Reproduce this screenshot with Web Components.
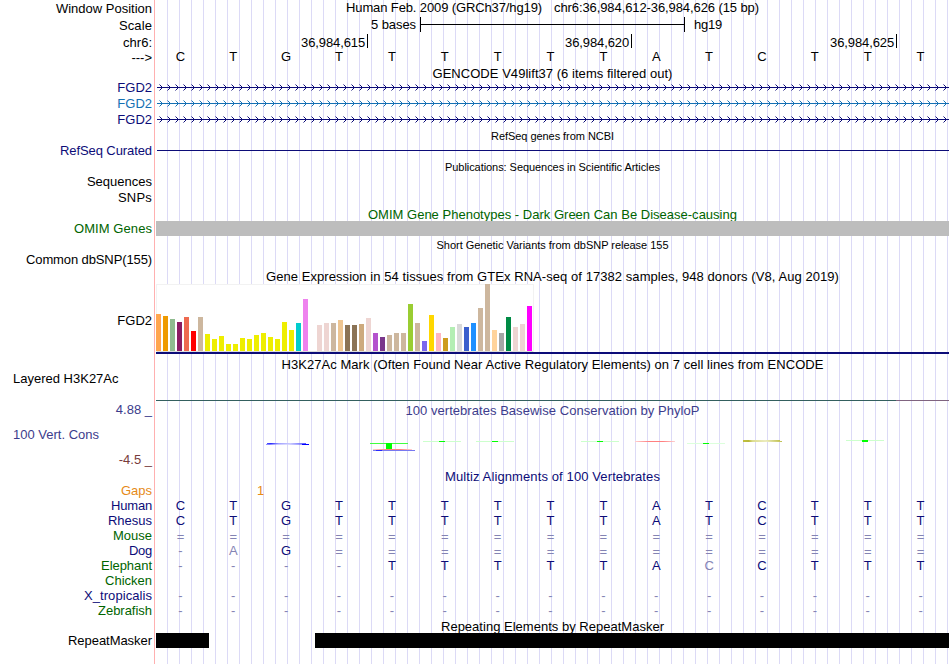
<!DOCTYPE html>
<html lang="en">
<head>
<meta charset="utf-8">
<title>chr6:36,984,612-36,984,626</title>
<style>
    body {
        margin: 0;
        background: #fff;
        color: #000;
        font: 13px/15px "Liberation Sans", Arial, sans-serif;
        overflow: hidden;
    }
</style>
</head>
<body>
<genome-browser></genome-browser>

<script>
const NAVY = '#0c0c78';
const GREEN = '#006400';

// Text stretched or tightened with letter-spacing to a given width
class FitText extends HTMLElement {
    constructor() {
        super();
        this.attachShadow({ mode: 'open' });
        this.shadowRoot.innerHTML = `
            <style>
                :host { display: inline-block; white-space: nowrap; }
            </style>
            <span><slot></slot></span>
        `;
    }

    connectedCallback() {
        const width = parseFloat(this.getAttribute('w'));
        if (!width) return;
        const span = this.shadowRoot.querySelector('span');
        const spacing = (width - span.getBoundingClientRect().width) / this.textContent.length;
        this.style.letterSpacing = spacing.toFixed(3) + 'px';
    }
}

// One horizontal strip: a right aligned label and the drawing area
class TrackRow extends HTMLElement {
    constructor() {
        super();
        this.attachShadow({ mode: 'open' });
        this.shadowRoot.innerHTML = `
            <style>
                :host {
                    display: grid;
                    grid-template-columns: 152px 793px;
                    column-gap: 4px;
                    height: var(--h, 15px);
                    box-sizing: border-box;
                }
                .label {
                    padding-top: var(--label-top, 0px);
                    text-align: right;
                    color: var(--label-color, #000);
                    white-space: nowrap;
                }
                .data { min-width: 0; }
            </style>
            <div class="label"><slot name="label"></slot></div>
            <div class="data"><slot></slot></div>
        `;
    }
}

class TrackTitle extends HTMLElement {
    constructor() {
        super();
        this.attachShadow({ mode: 'open' });
        this.shadowRoot.innerHTML = `
            <style>
                :host { display: flex; justify-content: center; white-space: nowrap; }
                :host([small]) { font-size: 11px; line-height: 12px; padding-top: 2px; }
            </style>
            <slot></slot>
        `;
    }
}

class ScaleBar extends HTMLElement {
    constructor() {
        super();
        this.attachShadow({ mode: 'open' });
        this.shadowRoot.innerHTML = `
            <style>
                :host { display: flex; padding-left: 215px; }
                .bar {
                    width: 263px;
                    height: 15px;
                    margin: 0 9px 0 4px;
                    border: solid #000;
                    border-width: 0 1px;
                    background: linear-gradient(#000, #000) 0 7px / 100% 1px no-repeat;
                }
            </style>
            <fit-text w="45">5 bases</fit-text>
            <div class="bar"></div>
            <fit-text w="28">hg19</fit-text>
        `;
    }
}

class PositionRuler extends HTMLElement {
    constructor() {
        super();
        this.attachShadow({ mode: 'open' });
        this.shadowRoot.innerHTML = `
            <style>
                :host { display: grid; grid-template-columns: 212px 264px 265px; }
                div {
                    display: flex;
                    justify-self: end;
                    height: 13px;
                    padding: 1px 2px 0 0;
                    border-right: 1px solid #000;
                }
            </style>
            <div><fit-text w="64">36,984,615</fit-text></div>
            <div><fit-text w="64">36,984,620</fit-text></div>
            <div><fit-text w="64">36,984,625</fit-text></div>
        `;
    }
}

// Fifteen bases, one per column; lower case letters are mismatches
class BaseRow extends HTMLElement {
    constructor() {
        super();
        this.attachShadow({ mode: 'open' });
    }

    connectedCallback() {
        const cells = this.getAttribute('seq').split('').map(base => {
            if (base === '=') return '<span class="dim low">=</span>';
            const dim = /[a-z-]/.test(base) ? ' class="dim"' : '';
            return `<span${dim}>${base.toUpperCase()}</span>`;
        });
        this.shadowRoot.innerHTML = `
            <style>
                :host {
                    display: grid;
                    grid-template-columns: repeat(15, 1fr);
                    width: 793px;
                    height: 15px;
                    margin-left: -2px;
                    text-align: center;
                }
                .dim { color: #8484b4; }
                .low { padding-top: 1px; }
            </style>
            ${cells.join('')}
        `;
    }
}

class GeneLine extends HTMLElement {
    constructor() {
        super();
        this.attachShadow({ mode: 'open' });
        let arrows = '';
        for (let x = 3; x < 793; x += 8) {
            arrows += `M${x + 0.5} 4.5l3 3l-3 3`;
        }
        this.shadowRoot.innerHTML = `
            <style>
                :host { display: block; height: 16px; }
                svg { display: block; }
                path { fill: none; stroke: currentColor; }
            </style>
            <svg width="793" height="16">
                <path d="M1 7.5H793"/>
                <path d="${arrows}"/>
            </svg>
        `;
    }
}

const TISSUES = [
    [37, 'ffa54f'], [35, 'ee9a00'], [32, '8fbc8f'], [29, '8b1c62'], [34, 'ee6a50'], [20, 'ff0000'],
    [34, 'cdb79e'], [17, 'eeee00'], [12, 'eeee00'], [15, 'eeee00'], [7, 'eeee00'], [7, 'eeee00'],
    [13, 'eeee00'], [12, 'eeee00'], [16, 'eeee00'], [18, 'eeee00'], [14, 'eeee00'], [12, 'eeee00'],
    [29, 'eeee00'], [21, 'eeee00'], [28, '00cdcd'], [52, 'ee82ee'], [0, '9ac0cd'], [26, 'eed5d2'],
    [28, 'eed5d2'], [28, 'cdb79e'], [31, 'eec591'], [26, '8b7355'], [26, '8b7355'], [27, 'cdaa7d'],
    [33, 'eed5d2'], [18, 'b452cd'], [14, '7a378b'], [16, 'cdb79e'], [18, 'cdb79e'], [18, 'cdb79e'],
    [47, '9acd32'], [28, 'cdb79e'], [10, '7a67ee'], [36, 'ffd700'], [18, 'ffb6c1'], [13, 'cd9b1d'],
    [24, 'b4eeb4'], [27, 'd9d9d9'], [24, '3a5fcd'], [28, '1e90ff'], [43, 'cdb79e'], [67, 'cdb79e'],
    [21, 'ffd39b'], [18, 'a6a6a6'], [34, '008b45'], [24, 'eed5d2'], [27, 'eed5d2'], [45, 'ff00ff']
];

class ExpressionChart extends HTMLElement {
    constructor() {
        super();
        this.attachShadow({ mode: 'open' });
        this.shadowRoot.innerHTML = `
            <style>
                :host { display: block; border-bottom: 2px solid ${NAVY}; }
                .frame {
                    display: flex;
                    align-items: flex-end;
                    gap: 2px;
                    box-sizing: border-box;
                    width: 378px;
                    height: 68px;
                    padding-bottom: 1px;
                    background: #fff;
                    box-shadow: inset 1px 1px #f2f2f2, inset -1px 0 #f2f2f2, inset 0 -1px #dcdcdc;
                }
                .frame div { width: 5px; }
            </style>
            <div class="frame">
                ${TISSUES.map(([height, color]) => `<div style="height:${height}px;background:#${color}"></div>`).join('')}
            </div>
        `;
    }
}

class SignalLine extends HTMLElement {
    constructor() {
        super();
        this.attachShadow({ mode: 'open' });
        this.shadowRoot.innerHTML = `
            <style>
                :host { display: flex; height: 1px; padding-top: 29px; }
                .main { width: 740px; background: #34605f; }
                .rest { flex: 1; background: #806480; }
            </style>
            <div class="main"></div>
            <div class="rest"></div>
        `;
    }
}

class ConservationWiggle extends HTMLElement {
    constructor() {
        super();
        this.attachShadow({ mode: 'open' });
        // weakly conserved T: a pale crossbar with a solid stem
        const stem = (x, y, h = 1, bar = '#ccffcc') => `
            <rect x="${x}" y="${y}" width="38" height="1" fill="${bar}"/>
            <rect x="${x + 16}" y="${y}" width="6" height="${h}" fill="#00ff00"/>`;
        this.shadowRoot.innerHTML = `
            <style>
                :host { display: block; }
                svg { display: block; }
            </style>
            <svg width="793" height="40" shape-rendering="crispEdges">
                <defs>
                    <linearGradient id="g"><stop offset="0" stop-color="#5050ff"/><stop offset=".1" stop-color="#2828ff"/><stop offset=".3" stop-color="#a0a0ff"/><stop offset=".6" stop-color="#c8c8ff"/><stop offset="1" stop-color="#5050ff"/></linearGradient>
                    <linearGradient id="r"><stop offset="0" stop-color="#ffd0d0"/><stop offset=".35" stop-color="#ff8080"/><stop offset=".7" stop-color="#ff8080"/><stop offset="1" stop-color="#ffd0d0"/></linearGradient>
                    <linearGradient id="c"><stop offset="0" stop-color="#c0c040"/><stop offset=".15" stop-color="#b8b838"/><stop offset=".25" stop-color="#dcdc90"/><stop offset=".6" stop-color="#ececc0"/><stop offset="1" stop-color="#c0c050"/></linearGradient>
                </defs>
                <rect x="111" y="25" width="39" height="1" fill="url(#g)"/>
                <rect x="110" y="26" width="36" height="1" fill="url(#g)" opacity=".6"/>
                <rect x="146" y="26" width="7" height="1" fill="#0000ff"/>
                <rect x="214" y="25" width="38" height="1" fill="#40ff40"/>
                <rect x="230" y="25" width="6" height="6" fill="#00ff00"/>
                <rect x="217" y="31" width="39" height="1" fill="url(#r)"/>
                <rect x="217" y="32" width="42" height="1" fill="#7878f0"/>
                <rect x="220" y="32" width="6" height="1" fill="#2828ff"/>
                ${stem(267, 23)}
                ${stem(320, 23)}
                ${stem(425, 23)}
                <rect x="479" y="23" width="40" height="1" fill="url(#r)"/>
                ${stem(531, 25, 1, '#dcffdc')}
                <rect x="587" y="22" width="37" height="1" fill="url(#c)"/>
                <rect x="587" y="23" width="39" height="1" fill="url(#c)"/>
                ${stem(690, 22, 2)}
            </svg>
        `;
    }
}

class RepeatBlocks extends HTMLElement {
    constructor() {
        super();
        this.attachShadow({ mode: 'open' });
        this.shadowRoot.innerHTML = `
            <style>
                :host { display: flex; justify-content: space-between; height: 15px; }
                div { background: #000; }
                .a { width: 53px; }
                .b { width: 634px; }
            </style>
            <div class="a"></div>
            <div class="b"></div>
        `;
    }
}

class GenomeBrowser extends HTMLElement {
    constructor() {
        super();
        this.attachShadow({ mode: 'open' });
        this.render();
    }

    title(text, width, { h = 14, color = '#000', small = false } = {}) {
        return `
            <track-row style="--h:${h}px">
                <track-title ${small ? 'small' : ''} style="color:${color}"><fit-text w="${width}">${text}</fit-text></track-title>
            </track-row>`;
    }

    row(label, content, { h = 15, top = 0, color = '#000', w = 0 } = {}) {
        const text = w ? `<fit-text w="${w}">${label}</fit-text>` : label;
        return `
            <track-row style="--h:${h}px;--label-top:${top}px;--label-color:${color}">
                <span slot="label">${text}</span>
                ${content}
            </track-row>`;
    }

    species(name, seq, w, color = NAVY, h = 15) {
        return this.row(name, seq ? `<base-row seq="${seq}" style="color:${NAVY}"></base-row>` : '', { h, color, w });
    }

    render() {
        this.shadowRoot.innerHTML = `
            <style>
                :host {
                    display: block;
                    width: 949px;
                    height: 664px;
                    background:
                        linear-gradient(#ffb0b0, #ffb0b0) 154px 0 / 1px 100% no-repeat,
                        linear-gradient(#fff, #fff) 0 0 / 156px 100% no-repeat,
                        repeating-linear-gradient(90deg, #dcdaf6 0 1px, #fff 1px 12px) -1px 0 / 960px 100%;
                }
                .position { display: flex; justify-content: center; gap: 12px; }
                .solid { height: 15px; background: #bdbdbd; }
                .rule { height: 1px; margin: 7px 0 0 1px; background: ${NAVY}; }
                .gap { padding-left: 101px; color: #e68a17; }
                .wiggle-label {
                    display: grid;
                    grid-template-rows: 25px 25px 15px;
                    color: #3c3c8c;
                }
                .wiggle-label .min { color: #783c3c; }
                .left { display: block; text-align: left; padding-left: 13px; }
            </style>
            ${this.row('Window Position', `
                <div class="position">
                    <fit-text w="196">Human Feb. 2009 (GRCh37/hg19)</fit-text>
                    <fit-text w="205">chr6:36,984,612-36,984,626 (15 bp)</fit-text>
                </div>`, { h: 17, top: 1 })}
            ${this.row('Scale', '<scale-bar></scale-bar>', { h: 17, top: 1, w: 33 })}
            ${this.row('chr6:', '<position-ruler></position-ruler>', { top: 1 })}
            ${this.row('---&gt;', '<base-row seq="CTGTTTTTTATCTTT"></base-row>', { h: 17, top: 1 })}

            ${this.title('GENCODE V49lift37 (6 items filtered out)', 240)}
            ${this.row('FGD2', `<gene-line style="color:${NAVY}"></gene-line>`, { h: 16, color: NAVY })}
            ${this.row('FGD2', '<gene-line style="color:#1470b4"></gene-line>', { h: 16, color: '#1470b4' })}
            ${this.row('FGD2', `<gene-line style="color:${NAVY}"></gene-line>`, { h: 16, color: NAVY })}

            ${this.title('RefSeq genes from NCBI', 123, { h: 15, small: true })}
            ${this.row('RefSeq Curated', '<div class="rule"></div>', { h: 16, color: NAVY, w: 92 })}

            ${this.title('Publications: Sequences in Scientific Articles', 215, { h: 15, small: true })}
            ${this.row('Sequences', '', { h: 16 })}
            ${this.row('SNPs', '', { h: 17, w: 34 })}

            ${this.title('OMIM Gene Phenotypes - Dark Green Can Be Disease-causing', 369, { color: GREEN })}
            ${this.row('OMIM Genes', '<div class="solid"></div>', { h: 16, color: GREEN, w: 78 })}

            ${this.title('Short Genetic Variants from dbSNP release 155', 232, { h: 15, small: true })}
            ${this.row('Common dbSNP(155)', '', { h: 17, w: 126 })}

            ${this.title('Gene Expression in 54 tissues from GTEx RNA-seq of 17382 samples, 948 donors (V8, Aug 2019)', 573, { h: 15 })}
            ${this.row('FGD2', '<expression-chart></expression-chart>', { h: 73, top: 29 })}

            ${this.title('H3K27Ac Mark (Often Found Near Active Regulatory Elements) on 7 cell lines from ENCODE', 542)}
            ${this.row('<span class="left">Layered H3K27Ac</span>', '<signal-line></signal-line>', { h: 31 })}

            ${this.row(`
                <div class="wiggle-label"><span>4.88 _</span><span class="left">100 Vert. Cons</span><span class="min">-4.5 _</span></div>`, `
                <track-title style="color:#3c3c8c;padding-top:1px"><fit-text w="294">100 vertebrates Basewise Conservation by PhyloP</fit-text></track-title>
                <conservation-wiggle></conservation-wiggle>`, { h: 67 })}

            ${this.title('Multiz Alignments of 100 Vertebrates', 215, { color: NAVY })}
            ${this.row('Gaps', '<div class="gap">1</div>', { color: '#e68a17' })}
            ${this.species('Human', 'CTGTTTTTTATCTTT', 41)}
            ${this.species('Rhesus', 'CTGTTTTTTATCTTT', 44)}
            ${this.species('Mouse', '===============', 39, GREEN)}
            ${this.species('Dog', '-aG============', 23)}
            ${this.species('Elephant', '----TTTTTAcCTTT', 51, GREEN)}
            ${this.species('Chicken', '', 47, GREEN)}
            ${this.species('X_tropicalis', '---------------', 68)}
            ${this.species('Zebrafish', '---------------', 54, GREEN, 16)}

            ${this.title('Repeating Elements by RepeatMasker', 223)}
            ${this.row('RepeatMasker', '<repeat-blocks></repeat-blocks>', { h: 31, w: 84 })}
        `;
    }
}

customElements.define('fit-text', FitText);
customElements.define('track-row', TrackRow);
customElements.define('track-title', TrackTitle);
customElements.define('scale-bar', ScaleBar);
customElements.define('position-ruler', PositionRuler);
customElements.define('base-row', BaseRow);
customElements.define('gene-line', GeneLine);
customElements.define('expression-chart', ExpressionChart);
customElements.define('signal-line', SignalLine);
customElements.define('conservation-wiggle', ConservationWiggle);
customElements.define('repeat-blocks', RepeatBlocks);
customElements.define('genome-browser', GenomeBrowser);
</script>
</body>
</html>
